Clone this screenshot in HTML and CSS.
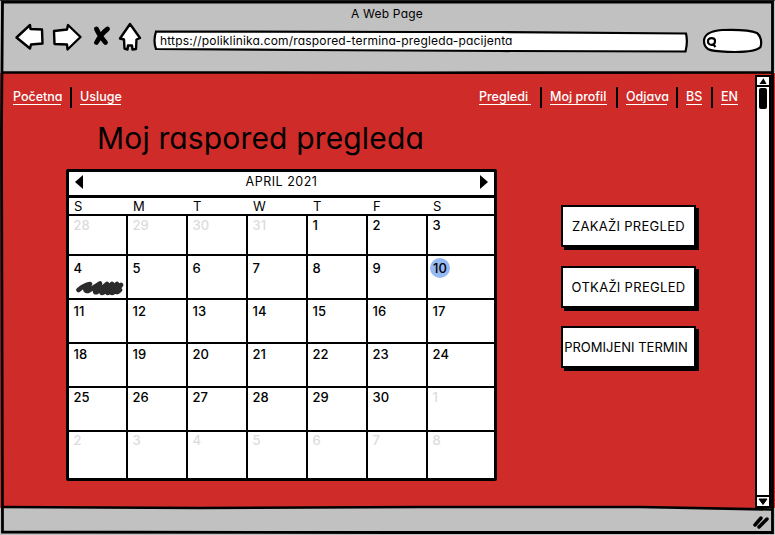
FILE: index.html
```
<!DOCTYPE html>
<html lang="bs">
<head>
<meta charset="utf-8">
<title>A Web Page</title>
<link rel="stylesheet" href="styles.css">
</head>
<body>
<div class="window">
  <header class="chrome">
    <div class="window-title">A Web Page</div>
    <div class="toolbar">
      <svg class="tools" width="130" height="36" viewBox="12 20 130 36">
        <g fill="#fff" stroke="#000" stroke-width="2.400" stroke-linejoin="round">
          <path d="M16.500 37.500 L30 25 L30.500 29 L42 29.500 L42.500 43.500 L31 44.500 L30 48.500 Z"/>
          <path d="M80.500 37 L68 25 L67 29.500 L54 31 L54.500 44 L67 44.500 L67.500 49.500 Z"/>
          <path d="M130 24 L140 38 L136.500 39.500 L136 49 L132.500 49.500 L132 45.500 L128 45.500 L127.500 49.500 L124.500 48.500 L124 39.500 L120 38.500 Z"/>
        </g>
        <path d="M96.500 29 Q99 35 105.500 42.500 M107.500 29 Q101 34 96.500 42.500" fill="none" stroke="#000" stroke-width="4.800" stroke-linecap="round"/>
      </svg>
      <div class="address">
        <svg class="address-shape" width="536" height="24" viewBox="153 30 536 24">
          <path d="M156 31.500 L420 32 L500 32 L686 33.500 Q688 42 685.500 51.500 L500 51 L300 50 L156 49 Q153 41 156 31.500 Z" fill="#fff" stroke="#000" stroke-width="2.200"/>
        </svg>
        <span class="address-text">https://poliklinika.com/raspored-termina-pregleda-pacijenta</span>
      </div>
      <svg class="search" width="62" height="26" viewBox="702 28 62 26">
        <path d="M704 41 C704 34 710 31 722 30 C736 29.500 750 30 757 33 C761 36 762 42 760.500 47 C757 51 745 52 735 52 C722 51.500 713 52 708 49 C705 47 704 44 704 41 Z" fill="#fff" stroke="#000" stroke-width="2.200"/>
        <path d="M708 41.500 C707.500 37 715.500 37 715 41 C715 46 708 46 708 41.500 Z M713 44 L715.500 47" fill="none" stroke="#000" stroke-width="2.200"/>
      </svg>
    </div>
  </header>

  <div class="viewport">
    <main class="page">
      <nav class="nav">
        <div class="nav-group">
          <a class="link w-home">Početna</a><i class="sep"></i><a class="link w-services">Usluge</a>
        </div>
        <div class="nav-group">
          <a class="link w-visits">Pregledi</a><i class="sep"></i><a class="link w-profile">Moj profil</a><i class="sep"></i><a class="link w-logout">Odjava</a><i class="sep"></i><a class="link w-bs">BS</a><i class="sep sep-tight"></i><a class="link w-en">EN</a>
        </div>
      </nav>
      <h1 class="heading">Moj raspored pregleda</h1>
      <div class="columns">
        <section class="calendar">
          <div class="cal-head">
            <svg width="8" height="14" viewBox="0 0 8 14"><path d="M0 7 L8 0 V14 Z"/></svg>
            <span class="month">APRIL 2021</span>
            <svg width="8" height="14" viewBox="0 0 8 14"><path d="M8 7 L0 0 V14 Z"/></svg>
          </div>
          <div class="week days"><b>S</b><b>M</b><b>T</b><b>W</b><b>T</b><b>F</b><b>S</b></div>
          <div class="week r1"><div class="out">28</div><div class="out">29</div><div class="out">30</div><div class="out">31</div><div>1</div><div>2</div><div>3</div></div>
          <div class="week r2"><div>4<svg class="scribble" width="48" height="18" viewBox="76 280 48 18"><path d="M78.500 290 Q84 285 90 284 Q82 291 88 291 L100 283.500 Q92 294 97 292 L107 284 Q98 296 104 292 L112 284 Q105 296 109 292 L117 284 Q108 296 114 292 L121 285 Q113 296 120 290" fill="none" stroke="#2b2b2b" stroke-width="4.600" stroke-linecap="round" stroke-linejoin="round"/></svg></div><div>5</div><div>6</div><div>7</div><div>8</div><div>9</div><div><span class="today">10</span></div></div>
          <div class="week r3"><div>11</div><div>12</div><div>13</div><div>14</div><div>15</div><div>16</div><div>17</div></div>
          <div class="week r4"><div>18</div><div>19</div><div>20</div><div>21</div><div>22</div><div>23</div><div>24</div></div>
          <div class="week r5"><div>25</div><div>26</div><div>27</div><div>28</div><div>29</div><div>30</div><div class="out">1</div></div>
          <div class="week r6"><div class="out">2</div><div class="out">3</div><div class="out">4</div><div class="out">5</div><div class="out">6</div><div class="out">7</div><div class="out">8</div></div>
        </section>
        <div class="actions">
          <button class="btn">ZAKAŽI PREGLED</button>
          <button class="btn">OTKAŽI PREGLED</button>
          <button class="btn btn-long">PROMIJENI TERMIN</button>
        </div>
      </div>
    </main>
    <div class="scrollbar">
      <svg class="arrow arrow-up" width="12" height="9" viewBox="0 0 12 9"><path d="M2 8 L6.500 1.500 L10 8 Z"/></svg>
      <div class="thumb"></div>
      <svg class="arrow arrow-down" width="12" height="9" viewBox="0 0 12 9"><path d="M2 2 L10 2 L6 7.500 Z" stroke="#000"/></svg>
    </div>
  </div>

  <footer class="status">
    <svg width="17" height="15" viewBox="753 515 17 15"><path d="M755 525 L761 518 M759 527 L767 519" stroke="#000" stroke-width="3.500" stroke-linecap="round"/></svg>
  </footer>

  <svg class="outline" width="775" height="535" viewBox="0 0 775 535" fill="none" stroke="#000">
    <path d="M0 0.500 H775" stroke="#3c403c" stroke-width="1"/>
    <path d="M2.500 2 L772.500 2 L772.500 532.500 L400 532.500 L2.500 532 L1.500 130 Z" stroke-width="2.800"/>
    <path d="M2 72.500 L200 72.500 L420 72.700 L772 72.500" stroke-width="2.600"/>
    <path d="M2 507 L200 508 L420 507 L640 507 L772 509.500" stroke-width="2.600"/>
  </svg>
</div>
</body>
</html>
```
FILE: styles.css
```
* { box-sizing: border-box; }
body {
  margin: 0;
  font: 13px/16px Inter, "Liberation Sans", sans-serif;
  font-feature-settings: "cv11";
  color: #000;
}
.window {
  position: relative;
  display: grid;
  grid-template-rows: 73px 435px 27px;
  width: 775px;
  height: 535px;
  overflow: hidden;
  background: #c1c1c1;
}
.outline { position: absolute; inset: 0; pointer-events: none; }

.chrome { padding-top: 6px; }
.window-title {
  text-align: center;
  font-size: 12px;
  letter-spacing: .2px;
  line-height: 16px;
  padding-right: 1px;
}
.toolbar { display: flex; padding-left: 12px; height: 36px; }
.tools { margin: -2px 11px 0 0; flex: none; }
.address { position: relative; width: 536px; height: 24px; margin-top: 8px; flex: none; }
.address-shape { position: absolute; inset: 0; }
.address-text {
  position: relative;
  display: block;
  padding: 3px 0 0 7px;
  font-size: 12px;
  letter-spacing: .17px;
}
.search { margin: 6px 0 0 13px; flex: none; }

.viewport { display: flex; background: #cf2b29; }
.page { width: 755px; padding: 14px 0 0 13px; }

.nav { display: flex; justify-content: space-between; padding-right: 17px; height: 21px; }
.nav-group { display: flex; }
.link {
  height: 17px;
  margin-top: 1px;
  border-bottom: 1px solid #fff;
  color: #fff;
  font-size: 12.5px;
  font-weight: 500;
  line-height: 18px;
  white-space: nowrap;
}
.sep { width: 2px; height: 21px; margin: 0 8px 0 9px; background: #000; }
.sep-tight { margin-left: 9px; }
.w-home { width: 48px; }
.w-services { width: 41px; }
.w-visits { width: 52px; }
.w-profile { width: 57px; }
.w-logout { width: 41px; }
.w-bs { width: 16px; }
.w-en { width: 17px; }

.heading {
  margin: 10px 0 0 84px;
  font-size: 30px;
  font-weight: 400;
  line-height: 40px;
  letter-spacing: .15px;
}

.columns { display: flex; padding-left: 53px; margin-top: 11px; }
.calendar {
  width: 431px;
  height: 312px;
  border: 3px solid #000;
  border-radius: 2px;
  background: #fff;
  flex: none;
}
.cal-head {
  display: flex;
  justify-content: space-between;
  height: 26px;
  padding: 3px 6px 0;
  border-bottom: 3px solid #000;
}
.month { font-size: 12.5px; letter-spacing: .5px; line-height: 13px; }
.week { display: grid; grid-template-columns: 59px repeat(5, 60px) 66px; height: 44px; border-bottom: 2px solid #000; }
.week > * { padding-left: 4.5px; border-right: 2px solid #000; font-weight: 500; letter-spacing: .1px; }
.week > :last-child { border-right: 0; }
.days { height: 18px; }
.week > b { padding-left: 5px; border: 0; font-weight: 400; }
.r1 { height: 40px; }
.r1 > * { padding-top: 1px; }
.r2 > * { padding-top: 4px; }
.r3 > * { padding-top: 3px; }
.r4 > * { padding-top: 2px; }
.r5 > * { padding-top: 1px; }
.r6 { height: 46px; border: 0; }
.out { color: #dcdcdc; }
.scribble { display: block; margin: 4px 0 0 2px; }
.today {
  display: block;
  width: 20px;
  height: 20px;
  margin: -2px 0 0 -2.5px;
  border-radius: 50%;
  background: #95b9f3;
  line-height: 20px;
  text-align: center;
}

.actions { display: grid; grid-auto-rows: 43px; row-gap: 17.5px; margin: 36px 0 0 64px; align-content: start; }
.btn {
  width: 135px;
  height: 42px;
  margin: 0;
  padding: 0;
  border: 2px solid #000;
  background: #fff;
  box-shadow: 3px 3px 0 #000;
  font: 400 13px/16px Inter, "Liberation Sans", sans-serif;
  letter-spacing: .3px;
  color: #000;
  white-space: nowrap;
}
.btn-long { padding-right: 5px; letter-spacing: 0; }

.scrollbar {
  display: flex;
  flex-direction: column;
  width: 16px;
  height: 433px;
  margin-top: 2px;
  border: 2px solid #000;
  background: #fff;
}
.arrow { flex: none; }
.arrow-up { border-bottom: 2px solid #000; height: 10px; }
.thumb { width: 8px; height: 21px; margin: 1px auto auto 2px; border-radius: 2px; background: #000; flex: none; }
.arrow-down { border-top: 2px solid #000; height: 11px; }

.status { display: flex; justify-content: flex-end; padding: 7px 5px 0 0; }
```
